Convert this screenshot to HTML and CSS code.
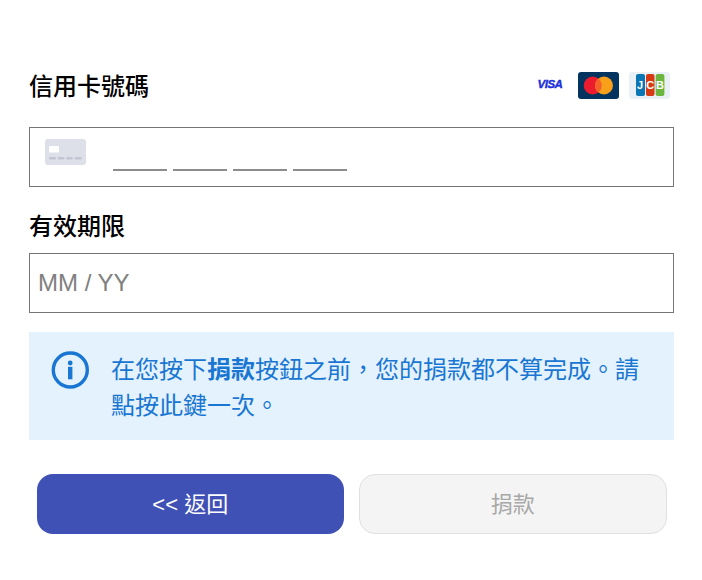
FILE: index.html
```html
<!DOCTYPE html>
<html lang="zh-Hant">
<head>
<meta charset="utf-8">
<title>捐款</title>
<link rel="stylesheet" href="styles.css">
</head>
<body>
<main class="form">
  <div class="head-row">
    <h2 class="label">信用卡號碼</h2>
    <div class="brands">
      <svg class="brand" width="32" height="27" viewBox="0 0 32 27"><text x="14" y="16" text-anchor="middle" class="visa-text">VISA</text></svg>
      <svg class="brand" width="41" height="27" viewBox="0 0 41 27"><rect width="41" height="27" rx="3" fill="#03345f"/><circle cx="14.700" cy="13.500" r="9" fill="#eb1c2d"/><circle cx="26" cy="13.500" r="9" fill="#f9a01b"/><path d="M20.350 6.500a9 9 0 0 1 0 14a9 9 0 0 1 0-14z" fill="#f4622a"/></svg>
      <svg class="brand" width="41" height="27" viewBox="0 0 41 27"><rect width="41" height="27" rx="3" fill="#e9f0f6"/><rect x="7" y="2" width="9" height="22" rx="2" fill="#0a77b4"/><rect x="17" y="2" width="8.500" height="22" rx="2" fill="#d63a12"/><rect x="26.700" y="2" width="8.700" height="22" rx="2" fill="#6cb63f"/><text x="11" y="17" class="jcb-text">J</text><text x="21.200" y="17" class="jcb-text">C</text><text x="31" y="17" class="jcb-text">B</text></svg>
    </div>
  </div>
  <div class="field field-card">
    <svg class="card-icon" width="41" height="26" viewBox="0 0 41 26"><rect width="41" height="26" rx="3" fill="#dde0e8"/><rect x="4" y="7" width="10" height="6.500" rx="1" fill="#fff"/><rect x="4" y="18" width="7" height="2.500" rx="1.250" fill="#c3c6d2"/><rect x="12.700" y="18" width="6.600" height="2.500" rx="1.250" fill="#c3c6d2"/><rect x="21.300" y="18" width="6.400" height="2.500" rx="1.250" fill="#c3c6d2"/><rect x="29.700" y="18" width="7" height="2.500" rx="1.250" fill="#c3c6d2"/></svg>
    <div class="digits"><span class="digit-group"></span><span class="digit-group"></span><span class="digit-group"></span><span class="digit-group"></span></div>
  </div>
  <h2 class="label label-expiry">有效期限</h2>
  <div class="field field-expiry">MM / YY</div>
  <div class="notice">
    <svg class="info-icon" width="38" height="38" viewBox="0 0 38 38"><circle cx="19.300" cy="19" r="17" fill="none" stroke="#1976d2" stroke-width="3.400"/><circle cx="19.200" cy="12" r="2.400" fill="#1976d2"/><rect x="17" y="15.800" width="4.400" height="12.500" fill="#1976d2"/></svg>
    <p class="notice-text">在您按下<strong>捐款</strong>按鈕之前，您的捐款都不算完成。請點按此鍵一次。</p>
  </div>
  <div class="actions">
    <button class="btn btn-back" type="button">&lt;&lt; 返回</button>
    <button class="btn btn-donate" type="button" disabled>捐款</button>
  </div>
</main>
</body>
</html>
```

FILE: styles.css
```css
* { box-sizing: border-box; }
html, body { margin: 0; padding: 0; background: #fff; }
body { font-family: "Liberation Sans", "Noto Sans CJK TC", sans-serif; }
.form { width: 702px; height: 580px; padding: 71px 28px 0 29px; }
.head-row { display: flex; justify-content: space-between; align-items: center; height: 32px; }
.label { margin: 0; font-size: 24px; font-weight: 500; line-height: 32px; color: #000; }
.brands { display: flex; align-items: center; gap: 10px; padding-right: 4px; padding-bottom: 3px; }
.brand { display: block; }
.visa-text { font: italic 700 11.500px "Liberation Sans", sans-serif; fill: #1a30d8; stroke: #1a30d8; stroke-width: 0.4px; letter-spacing: -0.5px; }
.jcb-text { font: 700 11px "Liberation Sans", sans-serif; fill: #fff; text-anchor: middle; }
.field { border: 1px solid #767676; height: 60px; background: #fff; }
.field-card { margin-top: 24px; display: flex; padding: 11px 0 0 15px; }
.card-icon { display: block; }
.digits { display: flex; gap: 6px; margin-left: 27px; height: 32px; }
.digit-group { display: block; width: 54px; border-bottom: 2px solid #8c8c8c; }
.label-expiry { margin-top: 24px; }
.field-expiry { margin-top: 10px; padding-left: 8px; font-size: 24px; line-height: 58px; color: #808080; }
.notice { margin-top: 19px; height: 108px; background: #e3f2fd; display: flex; padding: 19px 22px 0 22px; gap: 22px; }
.info-icon { flex: none; display: block; }
.notice-text { margin: 0; padding-top: 1px; font-size: 24px; line-height: 36px; color: #1976d2; }
.notice-text strong { font-weight: 700; }
.actions { display: flex; gap: 15px; margin-top: 34px; padding: 0 7px 0 8px; }
.btn { flex: 1; height: 60px; border-radius: 16px; font-family: "Liberation Sans", "Noto Sans CJK TC", sans-serif; font-size: 22px; padding: 0 0 5px; }
.btn-back { background: #3f51b5; color: #fff; border: 0; }
.btn-donate { background: #f4f4f4; color: #a8a8a8; border: 1px solid #e0e0e0; }
```
